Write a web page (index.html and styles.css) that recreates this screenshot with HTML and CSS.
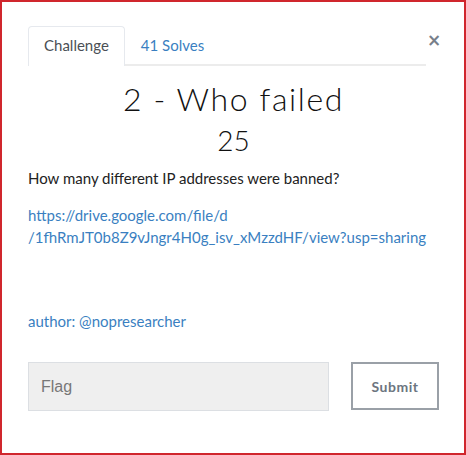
FILE: index.html
```html
<!DOCTYPE html>
<html>
<head>
<meta charset="utf-8">
<link rel="stylesheet" href="styles.css">
</head>
<body>
<div class="frame">
  <div class="header">
    <ul class="tabs">
      <li class="tab active">Challenge</li>
      <li class="tab">41 Solves</li>
    </ul>
    <span class="close">&times;</span>
  </div>
  <h2 class="title">2 - Who failed</h2>
  <h3 class="value">25</h3>
  <p class="desc">How many different IP addresses were banned?</p>
  <p class="link"><a href="#">https://drive.google.com/file/d<br>/1fhRmJT0b8Z9vJngr4H0g_isv_xMzzdHF/view?usp=sharing</a></p>
  <p class="author"><a href="#">author: @nopresearcher</a></p>
  <div class="flag-row">
    <input class="flag-input" type="text" placeholder="Flag">
    <button class="submit" type="button">Submit</button>
  </div>
</div>
</body>
</html>
```
FILE: styles.css
```css
html, body {
  margin: 0;
  padding: 0;
  background: #fff;
}
.frame {
  box-sizing: border-box;
  width: 466px;
  height: 455px;
  border: 2px solid #d0262d;
  padding: 24px 25px 0 26px;
  font-family: Lato, "Noto Sans", sans-serif;
  color: #212529;
}
.header {
  display: flex;
  align-items: flex-start;
}
.tabs {
  list-style: none;
  margin: 0;
  padding: 0;
  display: flex;
  width: 398px;
  border-bottom: 2px solid #ececec;
}
.tab {
  font-size: 15px;
  line-height: 21px;
  padding: 8px 15px;
  border: 1px solid transparent;
  border-bottom: none;
  border-radius: 4px 4px 0 0;
  color: #3a7fc1;
  margin-bottom: -2px;
}
.tab.active {
  color: #4a4f55;
  border-color: #e6e9ee;
  background: #fff;
  padding-bottom: 10px;
}
.close {
  margin-left: 1px;
  width: 12px;
  text-align: center;
  font-family: "DejaVu Sans", sans-serif;
  font-size: 17px;
  line-height: 20px;
  margin-top: 4px;
  color: #78808a;
  font-weight: bold;
}
.title {
  margin: 14px 0 0;
  text-align: center;
  font-size: 32px;
  line-height: 38px;
  font-weight: 300;
  letter-spacing: 1.6px;
  color: #111;
}
.value {
  margin: 5px 0 0;
  text-align: center;
  font-size: 28px;
  line-height: 34px;
  font-weight: 300;
  color: #111;
}
.desc {
  margin: 10px 0 0;
  font-size: 15px;
  line-height: 22px;
  color: #222;
}
.link {
  margin: 15px 0 0;
  font-size: 15px;
  line-height: 22px;
}
a {
  color: #3a7fc1;
  text-decoration: none;
}
.author {
  margin: 62px 0 0;
  font-size: 15px;
  line-height: 22px;
}
.flag-row {
  margin-top: 30px;
  display: flex;
  align-items: flex-start;
  gap: 22px;
}
.flag-input {
  box-sizing: border-box;
  width: 301px;
  height: 49px;
  margin: 0;
  padding: 0 12px;
  border: 1px solid #dcdfe3;
  background: #efefef;
  font-family: "Liberation Sans", Arial, sans-serif;
  font-size: 16px;
  color: #555;
}
.flag-input::placeholder {
  color: #777;
}
.submit {
  box-sizing: border-box;
  width: 88px;
  height: 48px;
  margin: 0;
  padding: 0;
  background: #fff;
  border: 2px solid #9aa0a7;
  font-family: Lato, sans-serif;
  font-weight: bold;
  font-size: 14px;
  letter-spacing: 0.5px;
  color: #6c7580;
}
```
